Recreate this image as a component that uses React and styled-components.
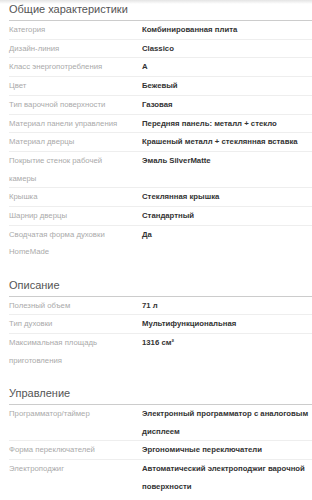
import React from 'react';
import styled, { createGlobalStyle } from 'styled-components';

const GlobalStyle = createGlobalStyle`
  html, body {
    margin: 0;
    padding: 0;
    background: #fff;
  }
  body {
    font-family: "Liberation Sans", Arial, sans-serif;
  }
`;

const Page = styled.div`
  position: relative;
  width: 312px;
  padding-left: 9px;
  box-sizing: border-box;
  &::before {
    content: '';
    position: absolute;
    top: 0;
    left: 0;
    right: 0;
    height: 4px;
    background: linear-gradient(#e4e4e4, rgba(255, 255, 255, 0));
  }
`;

const Section = styled.section`
  margin-bottom: 13.5px;
`;

const Title = styled.h3`
  margin: 0;
  padding: 2px 0 4px;
  font-size: 11px;
  font-weight: normal;
  color: #555;
  line-height: 14px;
  border-bottom: 1px solid #ccc;
`;

const Row = styled.div`
  display: grid;
  grid-template-columns: 133px 1fr;
  border-bottom: 1px solid ${(p) => (p.$last ? 'transparent' : '#eee')};
  font-size: 7.75px;
  line-height: 17.7px;
`;

const Label = styled.div`
  color: #aaa;
  padding-right: 18px;
`;

const Value = styled.div`
  color: #333;
  font-weight: bold;
`;

const sections = [
  {
    title: 'Общие характеристики',
    rows: [
      ['Категория', 'Комбинированная плита'],
      ['Дизайн-линия', 'Classico'],
      ['Класс энергопотребления', 'A'],
      ['Цвет', 'Бежевый'],
      ['Тип варочной поверхности', 'Газовая'],
      ['Материал панели управления', 'Передняя панель: металл + стекло'],
      ['Материал дверцы', 'Крашеный металл + стеклянная вставка'],
      ['Покрытие стенок рабочей камеры', 'Эмаль SilverMatte'],
      ['Крышка', 'Стеклянная крышка'],
      ['Шарнир дверцы', 'Стандартный'],
      ['Сводчатая форма духовки HomeMade', 'Да'],
    ],
  },
  {
    title: 'Описание',
    rows: [
      ['Полезный объем', '71 л'],
      ['Тип духовки', 'Мультифункциональная'],
      ['Максимальная площадь приготовления', '1316 см²'],
    ],
  },
  {
    title: 'Управление',
    rows: [
      ['Программатор/таймер', 'Электронный программатор с аналоговым дисплеем'],
      ['Форма переключателей', 'Эргономичные переключатели'],
      ['Электроподжиг', 'Автоматический электроподжиг варочной поверхности'],
    ],
  },
];

const App = () => (
  <Page>
    <GlobalStyle />
    {sections.map((s) => (
      <Section key={s.title}>
        <Title>{s.title}</Title>
        {s.rows.map(([label, value], i) => (
          <Row key={label} $last={i === s.rows.length - 1}>
            <Label>{label}</Label>
            <Value>{value}</Value>
          </Row>
        ))}
      </Section>
    ))}
  </Page>
);

export default App;
